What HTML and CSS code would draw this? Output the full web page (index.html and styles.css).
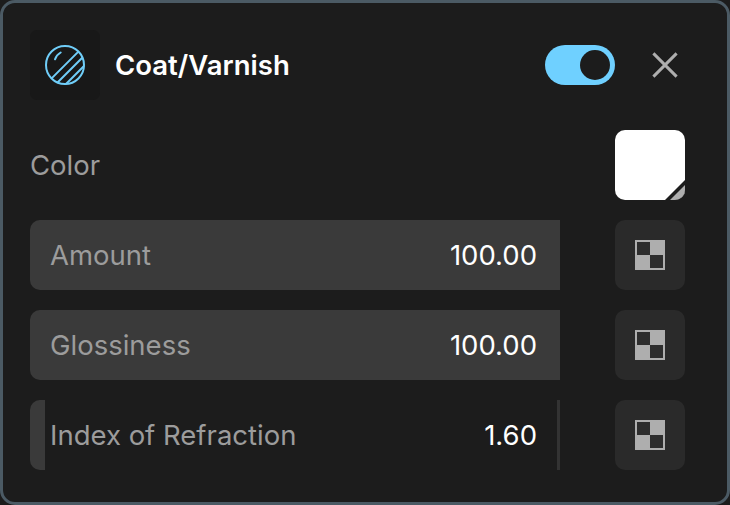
FILE: index.html
```html
<!DOCTYPE html>
<html lang="en">
<head>
<meta charset="utf-8">
<title>Coat/Varnish</title>
<link rel="stylesheet" href="styles.css">
</head>
<body>
<section class="panel">
  <header class="header">
    <div class="icon-box">
      <svg class="coat-icon" width="40" height="40" viewBox="0 0 40 40" fill="none" stroke="#6fcdf8" stroke-width="2">
        <circle cx="20" cy="20" r="19"/>
        <path d="M10 14.300 A12.500 12.500 0 0 1 15.700 7.500" stroke-linecap="round"/>
        <path d="M6.600 33.400 L33.400 6.600 M12.500 37.500 L37.500 12.500 M21 39 L39 21"/>
      </svg>
    </div>
    <h1 class="title">Coat/Varnish</h1>
    <div class="toggle"><span class="knob"></span></div>
    <button class="close" aria-label="Close">
      <svg width="30" height="30" viewBox="0 0 30 30" stroke="#aeaeae" stroke-width="3"><path d="M3.400 3.400 L26.600 26.600 M26.600 3.400 L3.400 26.600"/></svg>
    </button>
  </header>
  <div class="row">
    <span class="plain-label">Color</span>
    <div class="swatch"><svg class="corner" width="24" height="24" viewBox="0 0 24 24"><path d="M24 4 V24 H4 Z" fill="#1c1c1c"/><path d="M24 9 V24 H9 Z" fill="#aeaeae"/></svg></div>
  </div>
  <div class="row">
    <div class="slider full" style="--fill:100%"><span class="label">Amount</span><span class="value">100.00</span></div>
    <button class="tex"><span class="check"><i></i><i></i><i></i><i></i></span></button>
  </div>
  <div class="row">
    <div class="slider full" style="--fill:100%"><span class="label">Glossiness</span><span class="value">100.00</span></div>
    <button class="tex"><span class="check"><i></i><i></i><i></i><i></i></span></button>
  </div>
  <div class="row">
    <div class="slider" style="--fill:15px"><span class="label">Index of Refraction</span><span class="value">1.60</span></div>
    <button class="tex"><span class="check"><i></i><i></i><i></i><i></i></span></button>
  </div>
</section>
</body>
</html>
```
FILE: styles.css
```css
* { box-sizing: border-box; }
html, body { margin: 0; background: #1c1c1c; }
body { width: 730px; height: 505px; overflow: hidden; font-family: Inter, "Liberation Sans", sans-serif; }
.panel {
  width: 730px; height: 505px;
  background: #1c1c1c;
  border: 3px solid #4b5a64;
  border-radius: 15px;
  padding: 27px 42px 0 27px;
  display: flex; flex-direction: column; gap: 20px;
}
.header { display: flex; align-items: center; height: 70px; margin-bottom: 10px; }
.icon-box {
  width: 70px; height: 70px; border-radius: 7px; background: #181818;
  display: flex; align-items: center; justify-content: center;
  margin-right: 15px;
}
.coat-icon { display: block; }
.title { margin: 0; flex: 1; font-size: 27.500px; font-weight: 600; color: #fff; }
.toggle {
  width: 70px; height: 40px; border-radius: 20px; background: #6fd0ff;
  display: flex; align-items: center; justify-content: flex-end; padding-right: 5px;
  margin-right: 35px;
}
.knob { width: 30px; height: 30px; border-radius: 50%; background: #1c1c1c; }
.close { width: 30px; height: 30px; padding: 0; border: 0; background: none; margin-right: 5px; display: block; }
.close svg { display: block; }
.row { display: flex; justify-content: space-between; align-items: center; height: 70px; }
.plain-label { font-size: 27.500px; color: #9c9c9c; }
.swatch {
  width: 70px; height: 70px; background: #fff; border-radius: 10px; position: relative; overflow: hidden;
}
.corner { position: absolute; right: 0; bottom: 0; display: block; }
.slider {
  width: 530px; height: 70px;
  border-radius: 10px 0 0 10px;
  border-right: 3px solid #333;
  background: linear-gradient(to right, #3a3a3a var(--fill), transparent var(--fill));
  display: flex; align-items: center; justify-content: space-between;
  padding: 0 20px;
  font-size: 27.500px;
}
.slider.full { border-right: 0; padding-right: 23px; }
.label { color: #9c9c9c; }
.value { color: #fff; }
.tex {
  width: 70px; height: 70px; border: 0; padding: 0; border-radius: 10px; background: #2a2a2a;
  display: flex; align-items: center; justify-content: center;
}
.check {
  width: 30px; height: 30px; background: #aeaeae;
  display: grid; grid-template-columns: 15px 15px; grid-template-rows: 15px 15px;
}
.check i:nth-child(1) { margin: 2px 0 0 2px; background: #2d2d2d; }
.check i:nth-child(4) { margin: 0 2px 2px 0; background: #2d2d2d; }
```
